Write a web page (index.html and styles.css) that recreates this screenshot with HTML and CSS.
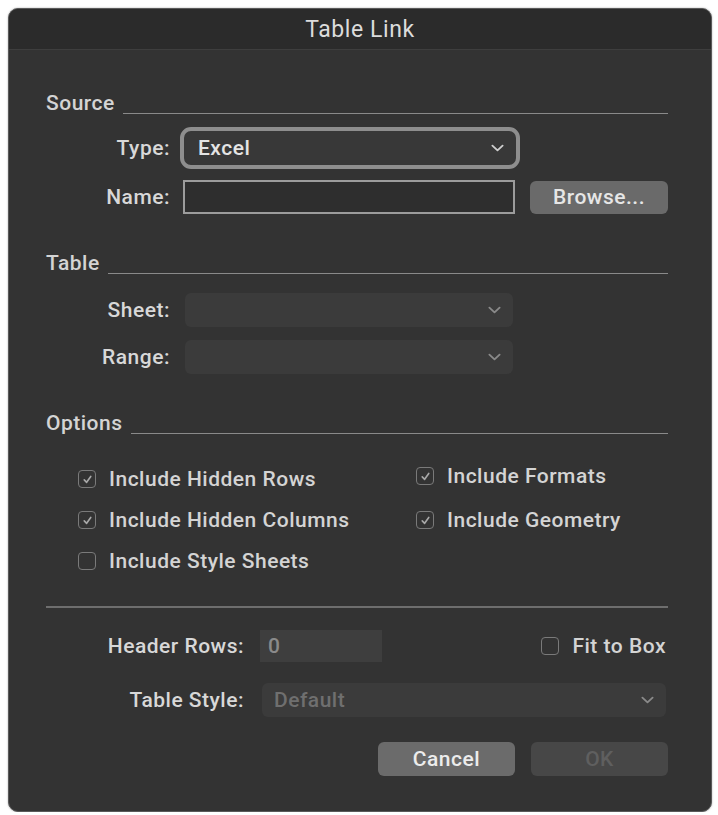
FILE: index.html
```html
<!DOCTYPE html>
<html>
<head>
<meta charset="utf-8">
<title>Table Link</title>
<link rel="stylesheet" href="styles.css">
</head>
<body>
<div class="window">
  <div class="titlebar">Table Link</div>
  <div class="content">
    <div class="heading"><span>Source</span><div class="rule"></div></div>
    <div class="form">
      <div class="row row-type">
        <label class="lbl">Type:</label>
        <div class="select focus"><span>Excel</span><svg class="chev" viewBox="0 0 14 8"><path d="M1.5 1.5 L7 6.5 L12.5 1.5"/></svg></div>
      </div>
      <div class="row row-name">
        <label class="lbl">Name:</label>
        <div class="input name"></div>
        <div class="btn browse">Browse...</div>
      </div>
    </div>

    <div class="heading h-table"><span>Table</span><div class="rule"></div></div>
    <div class="form">
      <div class="row row-sheet">
        <label class="lbl">Sheet:</label>
        <div class="select dis"><span></span><svg class="chev" viewBox="0 0 14 8"><path d="M1.5 1.5 L7 6.5 L12.5 1.5"/></svg></div>
      </div>
      <div class="row row-range">
        <label class="lbl">Range:</label>
        <div class="select dis"><span></span><svg class="chev" viewBox="0 0 14 8"><path d="M1.5 1.5 L7 6.5 L12.5 1.5"/></svg></div>
      </div>
    </div>

    <div class="heading h-options"><span>Options</span><div class="rule"></div></div>
    <div class="checks">
      <div class="check c1"><span class="box on"><svg viewBox="0 0 12 12"><path d="M3 6.3 L5.2 8.6 L9 3.2"/></svg></span>Include Hidden Rows</div>
      <div class="check c2 up"><span class="box on"><svg viewBox="0 0 12 12"><path d="M3 6.3 L5.2 8.6 L9 3.2"/></svg></span>Include Formats</div>
      <div class="check c1"><span class="box on"><svg viewBox="0 0 12 12"><path d="M3 6.3 L5.2 8.6 L9 3.2"/></svg></span>Include Hidden Columns</div>
      <div class="check c2"><span class="box on"><svg viewBox="0 0 12 12"><path d="M3 6.3 L5.2 8.6 L9 3.2"/></svg></span>Include Geometry</div>
      <div class="check c1"><span class="box"></span>Include Style Sheets</div>
    </div>

    <div class="sep"></div>

    <div class="bottom">
      <div class="row row-header">
        <label class="lbl wide">Header Rows:</label>
        <div class="input num">0</div>
        <div class="check fit"><span class="box"></span>Fit to Box</div>
      </div>
      <div class="row row-style">
        <label class="lbl wide">Table Style:</label>
        <div class="select dis style"><span>Default</span><svg class="chev" viewBox="0 0 14 8"><path d="M1.5 1.5 L7 6.5 L12.5 1.5"/></svg></div>
      </div>
    </div>

    <div class="buttons">
      <div class="btn cancel">Cancel</div>
      <div class="btn ok">OK</div>
    </div>
  </div>
</div>
</body>
</html>
```

FILE: styles.css
```css
html, body {
  margin: 0;
  padding: 0;
  background: #ffffff;
}

body {
  font-family: Roboto, "Liberation Sans", Arial, sans-serif;
  font-weight: 500;
  font-size: 21px;
  letter-spacing: 0.5px;
  color: #d6d6d6;
}

.window {
  margin: 8px 0 0 8px;
  width: 704px;
  height: 804px;
  box-sizing: border-box;
  background: #333333;
  border-radius: 10px;
  border: 1px solid #5a5a5a;
  overflow: hidden;
  box-shadow: 0 0 2px rgba(0,0,0,0.35);
}

.titlebar {
  height: 40px;
  line-height: 42px;
  text-align: center;
  font-size: 23px;
  font-weight: 400;
  letter-spacing: 0.6px;
  color: #dcdcdc;
  background: #2b2b2b;
  border-bottom: 1px solid #3e3e3e;
}

.content {
  padding: 42px 43px 0 37px;
}

.heading {
  display: flex;
  align-items: flex-end;
  height: 22px;
  line-height: 22px;
  color: #d4d4d4;
}

.heading .rule {
  flex: 1;
  height: 1px;
  margin-left: 8px;
  background: #8a8a8a;
}

.h-table { margin-top: 38px; }
.h-options { margin-top: 38px; }

.form {
  display: flex;
  flex-direction: column;
}

.row {
  display: flex;
  align-items: center;
}

.lbl {
  width: 124px;
  flex: none;
  text-align: right;
  margin-right: 13px;
  color: #d8d8d8;
}

.lbl.wide {
  width: 198px;
  margin-right: 16px;
}

.row-type { margin-top: 13px; }
.row-name { margin-top: 11px; }
.row-sheet { margin-top: 19px; }
.row-range { margin-top: 13px; }

.select {
  display: flex;
  align-items: center;
  justify-content: space-between;
  box-sizing: border-box;
  background: #3c3c3c;
  border-radius: 6px;
}

.select span {
  padding-left: 14px;
}

.select .chev {
  width: 13px;
  height: 8px;
  margin-right: 12px;
  fill: none;
  stroke: #cfcfcf;
  stroke-width: 2;
  stroke-linecap: round;
  stroke-linejoin: round;
}

.select.focus {
  width: 340px;
  height: 42px;
  margin-left: -3px;
  border: 4px solid #8e8e8e;
  border-radius: 11px;
  background: #383838;
  color: #e4e4e4;
}

.select.dis {
  width: 328px;
  height: 34px;
  margin-left: 2px;
  background: #3b3b3b;
}

.select.dis .chev {
  stroke: #8a8a8a;
}

.select.style {
  flex: 1;
  width: auto;
  margin-right: 2px;
  color: #6f6f6f;
}

.select.style span {
  padding-left: 12px;
}

.input {
  box-sizing: border-box;
  height: 34px;
}

.input.name {
  width: 332px;
  background: #2e2e2e;
  border: 2px solid #9c9c9c;
}

.btn {
  box-sizing: border-box;
  display: flex;
  align-items: center;
  justify-content: center;
  height: 34px;
  border-radius: 6px;
  background: #6a6a6a;
  color: #e6e6e6;
}

.browse {
  width: 138px;
  height: 33px;
  margin-left: 15px;
}

.checks {
  display: grid;
  grid-template-columns: 338px 1fr;
  grid-auto-rows: 26px;
  row-gap: 15px;
  margin-top: 32px;
  padding-left: 32px;
}

.check {
  display: flex;
  align-items: center;
  color: #d4d4d4;
}

.check.up {
  margin-top: -6px;
}

.box {
  box-sizing: border-box;
  width: 18px;
  height: 18px;
  flex: none;
  border: 1.5px solid #7a7a7a;
  border-radius: 4px;
  margin-right: 13px;
  display: flex;
  align-items: center;
  justify-content: center;
}

.box svg {
  width: 13px;
  height: 13px;
  fill: none;
  stroke: #a8a8a8;
  stroke-width: 1.5;
  stroke-linecap: round;
  stroke-linejoin: round;
}

.sep {
  margin-top: 32px;
  height: 2px;
  background: #6e6e6e;
}

.bottom {
  display: flex;
  flex-direction: column;
}

.row-header { margin-top: 22px; }
.row-style { margin-top: 21px; }

.input.num {
  width: 122px;
  height: 32px;
  background: #3e3e3e;
  color: #8a8a8a;
  padding-left: 8px;
  line-height: 32px;
}

.fit {
  margin-left: auto;
  margin-right: 2px;
}

.buttons {
  display: flex;
  justify-content: flex-end;
  gap: 16px;
  margin-top: 25px;
}

.cancel {
  width: 137px;
  color: #ececec;
  background: #6b6b6b;
}

.ok {
  width: 137px;
  background: #474747;
  color: #5f5f5f;
}
```
